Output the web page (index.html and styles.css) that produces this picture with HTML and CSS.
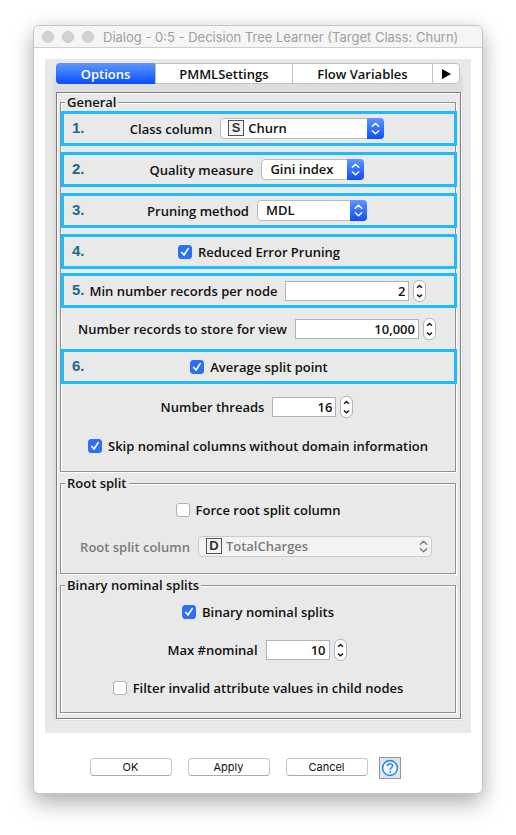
FILE: index.html
```
<!DOCTYPE html>
<html lang="en">
<head>
<meta charset="utf-8">
<meta name="viewport" content="width=device-width, initial-scale=1">
<title>Dialog - 0:5 - Decision Tree Learner (Target Class: Churn)</title>
<link rel="stylesheet" href="styles.css">
</head>
<body>
<svg class="defs" aria-hidden="true">
  <symbol id="updown" viewBox="0 0 17 21"><path d="M5.3 8.3 8.5 5.3l3.2 3M5.3 12.7l3.2 3 3.2-3"/></symbol>
  <symbol id="up" viewBox="0 0 11 10"><path d="M3 6.8 5.5 4.6 8 6.8"/></symbol>
  <symbol id="down" viewBox="0 0 11 10"><path d="M3 3.6 5.5 5.8 8 3.6"/></symbol>
</svg>
<main class="window">
  <header class="titlebar">
    <span class="light"></span><span class="light"></span><span class="light"></span>
    <h1 class="title">Dialog - 0:5 - Decision Tree Learner (Target Class: Churn)</h1>
  </header>

  <div class="panel">
    <div class="pane">
      <nav class="tabs" role="tablist">
        <button class="tab tab-options tab-active" role="tab" aria-selected="true">Options</button>
        <button class="tab tab-pmml" role="tab">PMMLSettings</button>
        <button class="tab tab-flow" role="tab">Flow Variables</button>
        <button class="tab tab-more" aria-label="More tabs"><svg width="10" height="12" viewBox="0 0 10 12"><path d="M1 1v10l9-5z"/></svg></button>
      </nav>

      <form class="frame" id="options">
        <fieldset class="group general">
          <legend>General</legend>
          <div class="row marked">
            <span class="step">1.</span>
            <label for="class-column">Class column</label>
            <span class="combo combo-class">
              <select id="class-column" class="with-type"><option>Churn</option></select>
              <span class="type">S</span>
              <svg class="cap"><use href="#updown"/></svg>
            </span>
          </div>
          <div class="row marked">
            <span class="step">2.</span>
            <label for="quality">Quality measure</label>
            <span class="combo combo-quality">
              <select id="quality"><option>Gini index</option></select>
              <svg class="cap"><use href="#updown"/></svg>
            </span>
          </div>
          <div class="row marked">
            <span class="step">3.</span>
            <label for="pruning">Pruning method</label>
            <span class="combo combo-pruning">
              <select id="pruning"><option>MDL</option></select>
              <svg class="cap"><use href="#updown"/></svg>
            </span>
          </div>
          <div class="row marked">
            <span class="step">4.</span>
            <label class="check"><input type="checkbox" checked>Reduced Error Pruning</label>
          </div>
          <div class="row marked close">
            <span class="step">5.</span>
            <label for="min-records">Min number records per node</label>
            <span class="spinner">
              <input id="min-records" class="wide" type="text" value="2">
              <span class="stepper">
                <button type="button" aria-label="Increase"><svg><use href="#up"/></svg></button>
                <button type="button" aria-label="Decrease"><svg><use href="#down"/></svg></button>
              </span>
            </span>
          </div>
          <div class="row store">
            <label for="store">Number records to store for view</label>
            <span class="spinner">
              <input id="store" class="wide" type="text" value="10,000">
              <span class="stepper">
                <button type="button" aria-label="Increase"><svg><use href="#up"/></svg></button>
                <button type="button" aria-label="Decrease"><svg><use href="#down"/></svg></button>
              </span>
            </span>
          </div>
          <div class="row marked flush">
            <span class="step">6.</span>
            <label class="check"><input type="checkbox" checked>Average split point</label>
          </div>
          <div class="row threads">
            <label for="threads">Number threads</label>
            <span class="spinner">
              <input id="threads" type="text" value="16">
              <span class="stepper">
                <button type="button" aria-label="Increase"><svg><use href="#up"/></svg></button>
                <button type="button" aria-label="Decrease"><svg><use href="#down"/></svg></button>
              </span>
            </span>
          </div>
          <div class="row skip">
            <label class="check"><input type="checkbox" checked>Skip nominal columns without domain information</label>
          </div>
        </fieldset>

        <fieldset class="group root">
          <legend>Root split</legend>
          <div class="row">
            <label class="check"><input type="checkbox">Force root split column</label>
          </div>
          <div class="row">
            <label class="off" for="root-column">Root split column</label>
            <span class="combo combo-root">
              <select id="root-column" class="with-type" disabled><option>TotalCharges</option></select>
              <span class="type">D</span>
              <svg class="cap cap-off"><use href="#updown"/></svg>
            </span>
          </div>
        </fieldset>

        <fieldset class="group binary">
          <legend>Binary nominal splits</legend>
          <div class="row">
            <label class="check"><input type="checkbox" checked>Binary nominal splits</label>
          </div>
          <div class="row">
            <label for="max-nominal">Max #nominal</label>
            <span class="spinner">
              <input id="max-nominal" type="text" value="10">
              <span class="stepper">
                <button type="button" aria-label="Increase"><svg><use href="#up"/></svg></button>
                <button type="button" aria-label="Decrease"><svg><use href="#down"/></svg></button>
              </span>
            </span>
          </div>
          <div class="row">
            <label class="check"><input type="checkbox">Filter invalid attribute values in child nodes</label>
          </div>
        </fieldset>
      </form>
    </div>
  </div>

  <footer class="actions">
    <button class="action">OK</button>
    <button class="action">Apply</button>
    <button class="action">Cancel</button>
    <button class="help" aria-label="Help"><svg width="18" height="18" viewBox="0 0 18 18"><circle cx="9" cy="9" r="7.4"/><path d="M6.5 7.2c0-1.5 1-2.5 2.6-2.5 1.5 0 2.5.8 2.5 2.1C11.6 8.7 9.2 8.8 9.2 10.8"/><path d="M9.2 12.2v1.8"/></svg></button>
  </footer>
</main>
</body>
</html>
```
FILE: styles.css
```
* { box-sizing: border-box; }

body {
  margin: 0;
  padding: 25px 33px 40px;
  background: #fff;
  color: #111;
  font: 600 13px/16px "Open Sans", "Noto Sans", sans-serif;
}

button, input, select { font: inherit; color: inherit; margin: 0; }

.defs { position: absolute; width: 0; height: 0; }

.window {
  border: 1px solid #c6c6c6;
  border-radius: 6px;
  background: #fff;
  box-shadow: 0 10px 22px rgba(0, 0, 0, 0.28), 0 0 16px rgba(0, 0, 0, 0.08);
}

.titlebar {
  display: flex;
  align-items: center;
  gap: 8px;
  height: 22px;
  padding-left: 8px;
  border-bottom: 1px solid #cdcdcd;
  border-radius: 5px 5px 0 0;
  background: #f5f5f5;
}

.light {
  width: 12px;
  height: 12px;
  border: 1px solid #c8c8c8;
  border-radius: 50%;
  background: #d2d2d2;
}

.title {
  margin: 0 0 0 1px;
  color: #a0a0a0;
  font: 400 13px/16px Inter, Roboto, sans-serif;
  white-space: nowrap;
}

.panel {
  margin: 11px 11px 0;
  padding: 16px 8px 12px;
  background: #e9e9e9;
}

.pane {
  display: flow-root;
  padding: 0 2px 2px 3px;
  border-radius: 4px;
  background: #dedede;
}

.tabs {
  display: flex;
  height: 21px;
  margin: -12px 1px 8px 0;
}

.tab {
  padding: 0;
  border: 1px solid #c2c2c2;
  border-width: 1px 0 1px 1px;
  background: #fff;
  line-height: 18px;
  text-align: center;
}

.tab-options { flex: 100; border-radius: 4px 0 0 4px; }
.tab-pmml { flex: 137; }
.tab-flow { flex: 141; }
.tab-more { flex: 26; border-right-width: 1px; border-radius: 0 4px 4px 0; }
.tab-more svg { display: block; margin: auto; }

.tab-active {
  border: 0;
  background: linear-gradient(#5e98fb, #0a4dff);
  color: #fff;
}

.frame {
  padding: 1px 4px 5px 3px;
  border: 1px solid #7d7d7d;
  background: #e9e9e9;
  box-shadow: inset 1px 1px #fff, 1px 1px #fff;
}

.group {
  min-width: 0;
  margin: 0 0 3px;
  padding: 0;
  border: 1px solid #8f8f8f;
  box-shadow: inset 1px 1px #fff, 1px 1px #fff;
}

.group:last-child { margin-bottom: 0; }

legend {
  margin-left: 4px;
  padding: 0 2px;
  background: #e9e9e9;
}

.row {
  display: flex;
  align-items: center;
  justify-content: center;
  gap: 8px;
  height: 38px;
  white-space: nowrap;
}

.general { padding: 1px 0 9px; }
.root .row:last-child { height: 35px; }
.root { padding-bottom: 9px; }
.binary { padding-bottom: 5px; }

.marked {
  position: relative;
  height: 35px;
  margin: 0 -2px 6px 0;
  border: 3px solid #1cbcff;
}

.marked:has(+ .close) { margin-bottom: 4px; }
.close, .flush { margin-bottom: 0; }
.store { height: 41px; }
.threads { height: 46px; }
.skip { height: 32px; }

.step {
  position: absolute;
  left: 8px;
  top: 6px;
  color: #1b6a88;
  font: 700 15px/16px "Liberation Sans", Arial, sans-serif;
}

.off { color: #7b7b7b; }

.check {
  display: flex;
  align-items: center;
  gap: 6px;
}

.check input {
  appearance: none;
  width: 14px;
  height: 14px;
  border: 1px solid #b0b0b0;
  border-radius: 3px;
  background: #fff;
}

.check input:checked {
  border-color: #2c6ffb;
  background: #2c6ffb url("data:image/svg+xml,%3Csvg xmlns='http://www.w3.org/2000/svg' viewBox='0 0 12 12'%3E%3Cpath d='M2.8 6.5 5 9 9.2 2.6' fill='none' stroke='white' stroke-width='1.7' stroke-linecap='round' stroke-linejoin='round'/%3E%3C/svg%3E");
}

.combo {
  position: relative;
  display: flex;
  height: 21px;
  margin-right: 4px;
}

.combo select {
  appearance: none;
  width: 100%;
  padding: 0 18px 1px 8px;
  border: 1px solid #bcbcbc;
  border-radius: 4px;
  background: #fff;
  opacity: 1;
}

.combo select.with-type { padding-left: 27px; }
.combo select:disabled { border-color: #cacaca; background: #f3f3f3; color: #7b7b7b; }

.combo-class { width: 164px; }
.combo-quality { width: 103px; }
.combo-pruning { width: 110px; }
.combo-root { width: 234px; }

.type {
  position: absolute;
  left: 8px;
  top: 2px;
  width: 16px;
  height: 16px;
  border: 1px solid #555;
  background: #f4f4f4;
  color: #333;
  font: 700 13px/14px "Liberation Sans", Arial, sans-serif;
  text-align: center;
}

.cap {
  position: absolute;
  right: 0;
  top: 0;
  width: 17px;
  height: 21px;
  border-radius: 0 4px 4px 0;
  background: linear-gradient(#5e98fb, #0a4dff);
  fill: none;
  stroke: #fff;
  stroke-width: 1.5;
  stroke-linecap: round;
  stroke-linejoin: round;
  pointer-events: none;
}

.cap-off { background: none; stroke: #808080; }

.spinner {
  display: flex;
  align-items: center;
  gap: 4px;
  margin-right: 2px;
}

.spinner input {
  width: 64px;
  height: 20px;
  padding: 0 3px;
  border: 1px solid #b2b2b2;
  border-radius: 0;
  background: #fff;
  text-align: right;
}

.spinner input.wide { width: 124px; }

.stepper {
  display: flex;
  flex-direction: column;
  width: 13px;
  height: 22px;
  border: 1px solid #b5b5b5;
  border-radius: 6px;
  background: #fff;
}

.stepper button {
  display: block;
  height: 10px;
  padding: 0;
  border: 0;
  background: none;
}

.stepper svg {
  display: block;
  width: 11px;
  height: 10px;
  fill: none;
  stroke: #222;
  stroke-width: 1.5;
}

.actions {
  display: flex;
  justify-content: center;
  align-items: flex-start;
  gap: 16px;
  padding: 24px 26px 14px 0;
}

.action {
  width: 82px;
  height: 18px;
  margin-top: 1px;
  padding: 0;
  border: 1px solid #c4c4c4;
  border-bottom-color: #aaa;
  border-radius: 4px;
  background: #fff;
  font: 400 11px/14px Inter, Roboto, sans-serif;
}

.help {
  display: grid;
  place-items: center;
  width: 22px;
  height: 22px;
  margin-left: -5px;
  padding: 0;
  border: 1px solid #969696;
  background: #e4e4e4;
}

.help svg { fill: none; stroke: #2a8df0; stroke-width: 1.6; }
.help circle { fill: #f4f9ff; }
```
